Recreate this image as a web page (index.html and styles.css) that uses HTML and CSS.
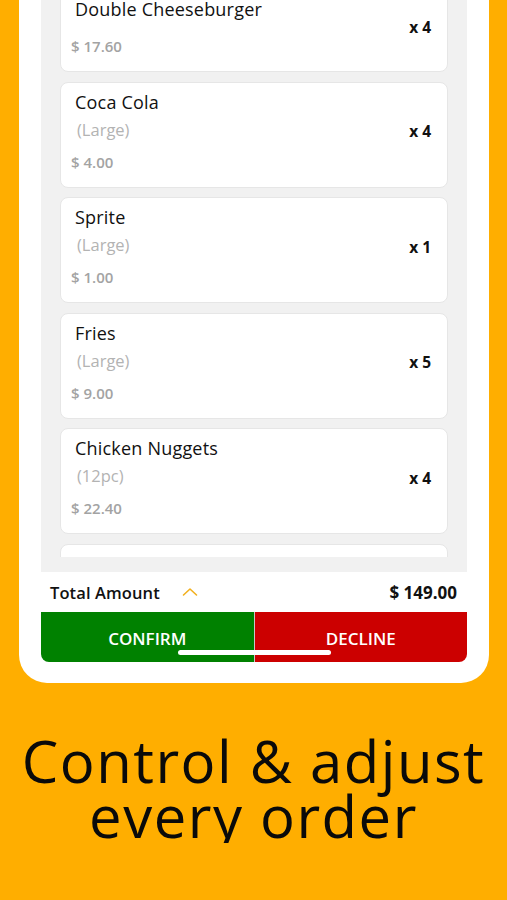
FILE: index.html
```html
<!DOCTYPE html>
<html lang="en">
<head>
    <meta charset="UTF-8">
    <meta name="viewport" content="width=device-width, initial-scale=1.0">
    <title>Order Details</title>
    <link rel="stylesheet" href="styles.css">
</head>
<body>

    <div class="phone">
        <div class="orders">
            <div class="orders-scroll">
                <div class="order-list">
                    <div class="order-item">
                        <div class="item-info">
                            <div class="item-name">Double Cheeseburger</div>
                            <div class="item-price">$ 17.60</div>
                        </div>
                        <div class="item-qty">x 4</div>
                    </div>
                    <div class="order-item">
                        <div class="item-info">
                            <div class="item-name">Coca Cola</div>
                            <div class="item-size">(Large)</div>
                            <div class="item-price">$ 4.00</div>
                        </div>
                        <div class="item-qty">x 4</div>
                    </div>
                    <div class="order-item">
                        <div class="item-info">
                            <div class="item-name">Sprite</div>
                            <div class="item-size">(Large)</div>
                            <div class="item-price">$ 1.00</div>
                        </div>
                        <div class="item-qty">x 1</div>
                    </div>
                    <div class="order-item">
                        <div class="item-info">
                            <div class="item-name">Fries</div>
                            <div class="item-size">(Large)</div>
                            <div class="item-price">$ 9.00</div>
                        </div>
                        <div class="item-qty">x 5</div>
                    </div>
                    <div class="order-item">
                        <div class="item-info">
                            <div class="item-name">Chicken Nuggets</div>
                            <div class="item-size">(12pc)</div>
                            <div class="item-price">$ 22.40</div>
                        </div>
                        <div class="item-qty">x 4</div>
                    </div>
                    <div class="order-item">
                        <div class="item-info">
                            <div class="item-name">Apple Pie</div>
                            <div class="item-price">$ 2.00</div>
                        </div>
                        <div class="item-qty">x 2</div>
                    </div>
                </div>
            </div>
        </div>

        <div class="total-row">
            <span class="total-label">Total Amount</span>
            <svg class="chevron" width="16" height="10" viewBox="0 0 16 10">
                <path d="M1.5 8 L8 2 L14.5 8" fill="none" stroke="#f2b01e" stroke-width="1.6" stroke-linecap="round" stroke-linejoin="round"/>
            </svg>
            <span class="total-value">$ 149.00</span>
        </div>

        <div class="actions">
            <button class="btn btn-confirm">CONFIRM</button>
            <button class="btn btn-decline">DECLINE</button>
        </div>

        <div class="home-indicator"></div>
    </div>

    <h1 class="headline">Control &amp; adjust<br>every order</h1>

</body>
</html>
```

FILE: styles.css
```css
body {
    font-family: "Open Sans", "Noto Sans", sans-serif;
    margin: 0;
    padding: 0;
    background-color: #ffae00;
    color: #111;
}

.phone {
    position: relative;
    margin: 0 18px 0 19px;
    background-color: #fff;
    border-radius: 0 0 28px 28px;
    padding: 0 22px 21px;
}

/* order list */

.orders {
    background-color: #f1f1f1;
    padding: 0 19px 15px;
}

.orders-scroll {
    height: 557px;
    overflow: hidden;
}

.order-list {
    display: flex;
    flex-direction: column;
    gap: 9.5px;
    margin-top: -11px; /* list is scrolled a little */
}

.order-item {
    display: flex;
    align-items: center;
    justify-content: space-between;
    background-color: #fff;
    border: 1px solid #e6e6e6;
    border-radius: 8px;
    padding: 7px 16px 14px 10px;
}

.item-info {
    display: flex;
    flex-direction: column;
}

.item-name {
    margin-left: 4px;
    font-size: 18px;
    font-weight: 500;
    line-height: 24px;
    letter-spacing: 0.2px;
    color: #111;
}

.item-size {
    margin: 2px 0 0 6px;
    font-size: 16.5px;
    line-height: 28px;
    color: #b3b3b3;
}

.item-price {
    margin-top: 7px;
    font-size: 15px;
    font-weight: 600;
    line-height: 22px;
    color: #a3a3a3;
}

.item-name + .item-price {
    margin-top: 14px;
}

.item-qty {
    font-size: 15.5px;
    font-weight: 700;
    color: #111;
}

/* total */

.total-row {
    display: flex;
    align-items: center;
    height: 40px;
    padding: 0 10px 0 9px;
}

.total-label {
    font-size: 16.5px;
    font-weight: 600;
    letter-spacing: 0.1px;
}

.chevron {
    margin-left: 22px;
}

.total-value {
    margin-left: auto;
    font-size: 17px;
    font-weight: 700;
}

/* buttons */

.actions {
    display: flex;
    height: 50px;
}

.btn {
    flex: 1;
    border: none;
    font-family: inherit;
    font-size: 17px;
    font-weight: 600;
    color: #fff;
    padding: 2px 0 0;
}

.btn-confirm {
    background-color: #008100;
    border-radius: 0 0 0 8px;
    border-right: 1px solid #c7c7c7;
}

.btn-decline {
    background-color: #cc0000;
    border-radius: 0 0 8px 0;
}

.home-indicator {
    position: absolute;
    left: 50%;
    bottom: 28px;
    width: 153px;
    height: 5px;
    margin-left: -76px;
    background-color: #fff;
    border-radius: 3px;
}

/* headline */

.headline {
    margin: 50px 0 0;
    text-align: center;
    font-size: 58px;
    font-weight: 500;
    line-height: 55px;
    letter-spacing: 1.5px;
    color: #0a0a0a;
}
```
